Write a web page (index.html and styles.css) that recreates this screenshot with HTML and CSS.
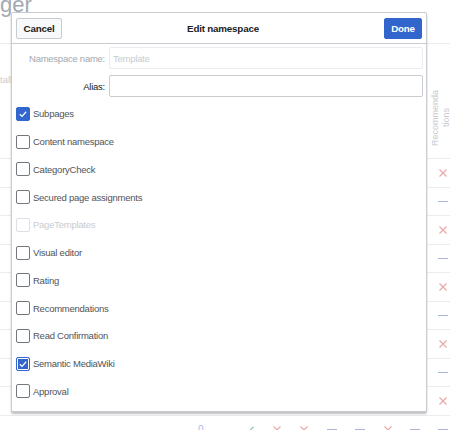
FILE: index.html
```html
<!DOCTYPE html>
<html>
<head>
<meta charset="utf-8">
<link rel="stylesheet" href="styles.css">
</head>
<body>
<div class="page">
  <div class="title">ger</div>
  <div class="table">
    <div class="row head">
      <div class="lead"><span class="faint">tall</span></div>
      <div class="cell hcell"><span class="vtext">Recommenda<br>tions</span></div>
    </div>
    <div class="row"><div class="cell"><svg class="x" viewBox="0 0 8 8"><path d="M0.5 0.5L7.5 7.5M7.5 0.5L0.5 7.5"/></svg></div></div>
    <div class="row"><div class="cell"><span class="dash"></span></div></div>
    <div class="row"><div class="cell"><svg class="x" viewBox="0 0 8 8"><path d="M0.5 0.5L7.5 7.5M7.5 0.5L0.5 7.5"/></svg></div></div>
    <div class="row"><div class="cell"><span class="dash"></span></div></div>
    <div class="row"><div class="cell"><svg class="x" viewBox="0 0 8 8"><path d="M0.5 0.5L7.5 7.5M7.5 0.5L0.5 7.5"/></svg></div></div>
    <div class="row"><div class="cell"><span class="dash"></span></div></div>
    <div class="row"><div class="cell"><svg class="x" viewBox="0 0 8 8"><path d="M0.5 0.5L7.5 7.5M7.5 0.5L0.5 7.5"/></svg></div></div>
    <div class="row"><div class="cell"><span class="dash"></span></div></div>
    <div class="row"><div class="cell"><svg class="x" viewBox="0 0 8 8"><path d="M0.5 0.5L7.5 7.5M7.5 0.5L0.5 7.5"/></svg></div></div>
    <div class="row foot">
      <div class="cell num">0</div>
      <div class="cell"><svg class="ok" viewBox="0 0 10 8"><path d="M0.5 4.5L3.5 7.2L9.5 0.8"/></svg></div>
      <div class="cell"><svg class="x" viewBox="0 0 8 8"><path d="M0.5 0.5L7.5 7.5M7.5 0.5L0.5 7.5"/></svg></div>
      <div class="cell"><svg class="x" viewBox="0 0 8 8"><path d="M0.5 0.5L7.5 7.5M7.5 0.5L0.5 7.5"/></svg></div>
      <div class="cell"><span class="dash"></span></div>
      <div class="cell"><span class="dash"></span></div>
      <div class="cell"><svg class="x" viewBox="0 0 8 8"><path d="M0.5 0.5L7.5 7.5M7.5 0.5L0.5 7.5"/></svg></div>
      <div class="cell"><span class="dash"></span></div>
      <div class="cell"><span class="dash"></span></div>
    </div>
  </div>
</div>

<div class="dialog">
  <div class="dlg-head">
    <button class="btn">Cancel</button>
    <div class="dlg-title">Edit namespace</div>
    <button class="btn primary">Done</button>
  </div>
  <div class="dlg-body">
    <div class="form">
      <label class="flabel disabled">Namespace name:</label>
      <div class="input disabled">Template</div>
      <label class="flabel">Alias:</label>
      <div class="input"></div>
    </div>
    <ul class="checks">
      <li class="check on"><span class="box"><svg viewBox="0 0 14 14"><path d="M3.3 7.3L5.9 9.8L10.7 4.4"/></svg></span><span class="lbl">Subpages</span></li>
      <li class="check"><span class="box"></span><span class="lbl">Content namespace</span></li>
      <li class="check"><span class="box"></span><span class="lbl">CategoryCheck</span></li>
      <li class="check"><span class="box"></span><span class="lbl">Secured page assignments</span></li>
      <li class="check off"><span class="box"></span><span class="lbl">PageTemplates</span></li>
      <li class="check"><span class="box"></span><span class="lbl">Visual editor</span></li>
      <li class="check"><span class="box"></span><span class="lbl">Rating</span></li>
      <li class="check"><span class="box"></span><span class="lbl">Recommendations</span></li>
      <li class="check"><span class="box"></span><span class="lbl">Read Confirmation</span></li>
      <li class="check on focus"><span class="box"><svg viewBox="0 0 14 14"><path d="M3.3 7.3L5.9 9.8L10.7 4.4"/></svg></span><span class="lbl">Semantic MediaWiki</span></li>
      <li class="check"><span class="box"></span><span class="lbl">Approval</span></li>
    </ul>
  </div>
</div>
</body>
</html>
```

FILE: styles.css
```css
html, body {
  margin: 0;
  padding: 0;
  background: #fff;
  overflow: hidden;
  width: 450px;
  height: 430px;
  font-family: "Liberation Sans", Arial, sans-serif;
}

.page {
  position: relative;
  width: 457px;
}

.title {
  font-size: 22px;
  line-height: 22px;
  color: #a2a9b1;
  margin-top: -6px;
  height: 49px;
  overflow: hidden;
}

.table {
  width: 457px;
  border-top: 1px solid #eaecf0;
}

.row {
  display: flex;
  justify-content: flex-end;
  height: 28.5px;
  box-sizing: border-box;
  border-bottom: 1px solid #eaecf0;
}

.row.head {
  height: 115px;
  justify-content: space-between;
}

.lead {
  padding-top: 25px;
}

.faint {
  font-size: 9.5px;
  color: #c8ccd1;
}

.cell {
  width: 27.75px;
  display: flex;
  align-items: center;
  justify-content: center;
  flex: none;
}

.hcell {
  align-items: flex-end;
  padding-bottom: 12px;
  box-sizing: border-box;
  margin-right: 2px;
}

.vtext {
  writing-mode: vertical-rl;
  transform: rotate(180deg);
  font-size: 9px;
  line-height: 11px;
  color: #c8ccd1;
  text-align: center;
}

.x {
  width: 8px;
  height: 8px;
  fill: none;
  stroke: #eba7a7;
  stroke-width: 1.2;
}

.ok {
  width: 10px;
  height: 8px;
  fill: none;
  stroke: #8fd0ad;
  stroke-width: 1.3;
}

.dash {
  display: block;
  width: 10px;
  height: 1.5px;
  background: #aab5dc;
}

.row.foot {
  border-bottom: none;
}

.num {
  width: 48px;
  font-size: 10px;
  color: #a8bce8;
  justify-content: flex-start;
  padding-left: 11px;
  box-sizing: border-box;
}

/* dialog */
.dialog {
  position: absolute;
  left: 11px;
  top: 12px;
  width: 416px;
  height: 400px;
  box-sizing: border-box;
  background: #fff;
  border: 1px solid #c8ccd1;
  border-radius: 2px;
  box-shadow: 0 2px 2px 0 rgba(0, 0, 0, 0.25);
  display: flex;
  flex-direction: column;
}

.dlg-head {
  display: grid;
  grid-template-columns: auto 1fr auto;
  align-items: center;
  height: 30px;
  padding: 0 4px;
  border-bottom: 1px solid #c8ccd1;
}

.dlg-title {
  text-align: center;
  font-weight: bold;
  font-size: 9.8px;
  letter-spacing: -0.2px;
  color: #202122;
}

.btn {
  height: 21px;
  box-sizing: border-box;
  border: 1px solid #c8ccd1;
  border-radius: 2px;
  background: #f8f9fa;
  color: #202122;
  font-family: "Liberation Sans", Arial, sans-serif;
  font-weight: bold;
  font-size: 9.8px;
  letter-spacing: -0.2px;
  padding: 0;
  width: 46px;
}

.btn.primary {
  width: 38px;
  background: #36c;
  border-color: #36c;
  color: #fff;
}

.dlg-body {
  padding: 3px 3px 0 4px;
}

.form {
  display: grid;
  grid-template-columns: 89px 1fr;
  column-gap: 4px;
  row-gap: 6px;
}

.flabel {
  text-align: right;
  font-size: 9.5px;
  letter-spacing: -0.25px;
  color: #202122;
  align-self: center;
}

.flabel.disabled {
  color: #a2a9b1;
}

.input {
  height: 22px;
  box-sizing: border-box;
  border: 1px solid #c8ccd1;
  border-radius: 2px;
  font-size: 9.5px;
  letter-spacing: -0.25px;
  padding-left: 3px;
  display: flex;
  align-items: center;
}

.input.disabled {
  border-color: #eaecf0;
  color: #c8ccd1;
}

.checks {
  list-style: none;
  margin: 3px 0 0;
  padding: 0;
}

.check {
  height: 27.75px;
  display: flex;
  align-items: center;
  gap: 3px;
}

.box {
  width: 14px;
  height: 14px;
  box-sizing: border-box;
  border: 1px solid #72777d;
  border-radius: 2px;
  background: #fff;
  display: flex;
}

.box svg {
  width: 12px;
  height: 12px;
  fill: none;
  stroke: #fff;
  stroke-width: 1.4;
}

.check.on .box {
  background: #36c;
  border-color: #36c;
}

.check.focus .box {
  box-shadow: inset 0 0 0 1px #fff;
}

.check.off .box {
  border-color: #dcdfe3;
}

.lbl {
  font-size: 9.5px;
  letter-spacing: -0.25px;
  color: #4f5459;
}

.check.off .lbl {
  color: #c8ccd1;
}
```
